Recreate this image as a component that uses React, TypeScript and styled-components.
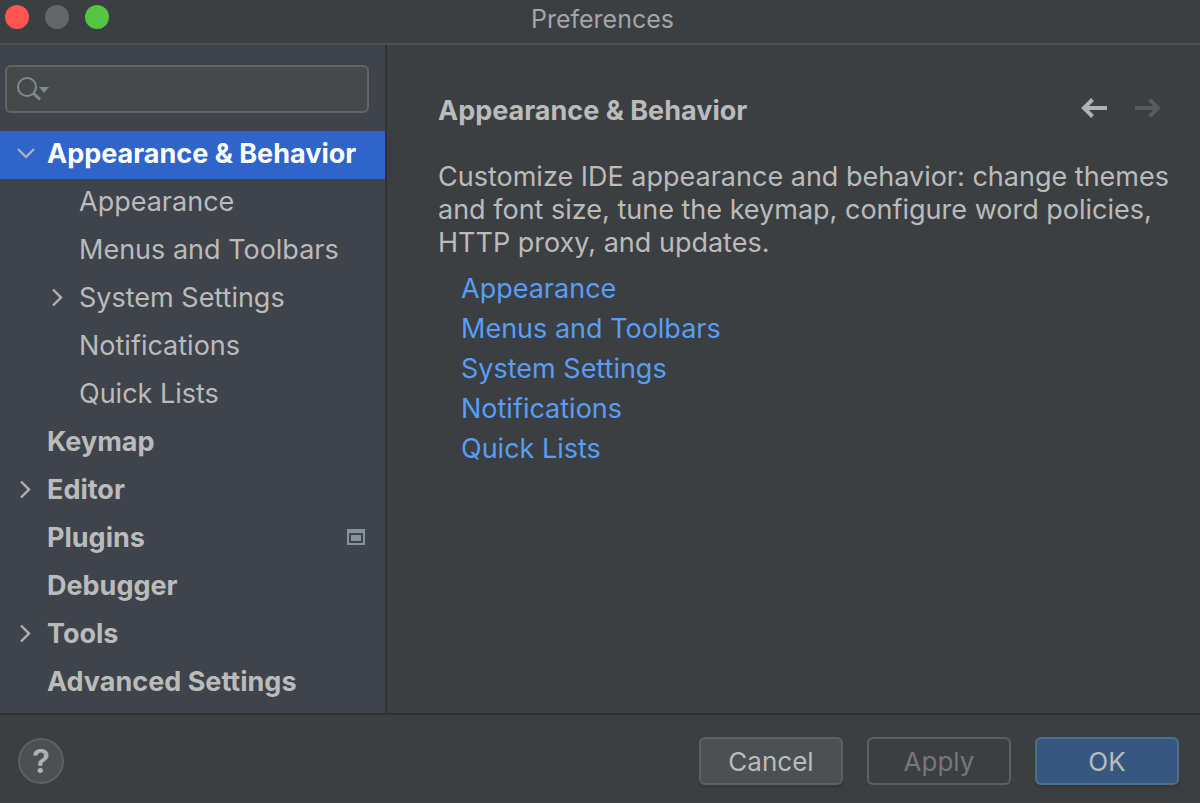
import React, { useState } from "react";
import styled, { createGlobalStyle } from "styled-components";

const GlobalStyle = createGlobalStyle`
  *, *::before, *::after { box-sizing: border-box; }
  body {
    margin: 0;
    background: #3c3f41;
    color: #bbbbbb;
    font-family: Inter, "Liberation Sans", sans-serif;
    font-size: 27px;
    line-height: 32px;
  }
  button, input { font: inherit; color: inherit; }
  ul { list-style: none; margin: 0; padding: 0; }
`;

const Window = styled.div`
  display: flex;
  flex-direction: column;
  min-height: 100vh;
`;

const TitleBar = styled.header`
  display: grid;
  grid-template-columns: 1fr auto 1fr;
  align-items: start;
  height: 45px;
  padding: 5px 0 0 5px;
  border-bottom: 2px solid #515151;
`;

const WindowControls = styled.div`
  display: flex;
  gap: 16px;
`;

const WindowControl = styled.button<{ $color: string }>`
  width: 24px;
  height: 24px;
  padding: 0;
  border: 0;
  border-radius: 50%;
  background: ${(p) => p.$color};
`;

const WindowTitle = styled.div`
  color: #a4a5a6;
  font-size: 25px;
  line-height: 28px;
`;

const Body = styled.div`
  display: flex;
  flex: 1;
`;

const Sidebar = styled.nav`
  flex: none;
  width: 387px;
  padding: 20px 0 6px;
  border-right: 2px solid #323232;
  background: #3f434c;
`;

const SearchBox = styled.label`
  display: flex;
  align-items: center;
  height: 48px;
  margin: 0 16px 18px 5px;
  padding-left: 8px;
  border: 2px solid #646464;
  border-radius: 6px;
  background: #45494a;
`;

const SearchInput = styled.input`
  flex: 1;
  min-width: 0;
  border: 0;
  outline: 0;
  background: transparent;
`;

const TreeRow = styled.button<{ $level: number; $selected: boolean }>`
  display: flex;
  align-items: center;
  width: 100%;
  height: 48px;
  padding: 0 20px 2px ${(p) => (p.$level === 0 ? 16 : 48)}px;
  border: 0;
  background: ${(p) => (p.$selected ? "#2f65ca" : "transparent")};
  color: ${(p) => (p.$selected ? "#ffffff" : "#bbbbbb")};
  font-weight: ${(p) => (p.$level === 0 ? 700 : 400)};
  text-align: left;
  white-space: nowrap;
`;

const Disclosure = styled.span`
  display: flex;
  flex: none;
  width: 31px;
`;

const RowLabel = styled.span`
  flex: 1;
`;

const Content = styled.main`
  flex: 1;
  min-width: 0;
  padding: 50px 20px 32px 51px;
`;

const ContentHeader = styled.div`
  display: flex;
  align-items: center;
  justify-content: space-between;
`;

const Heading = styled.h1`
  margin: 0;
  font-size: 27px;
  font-weight: 700;
`;

const History = styled.div`
  display: flex;
  gap: 22px;
  padding-right: 16px;
`;

const HistoryButton = styled.button`
  display: flex;
  padding: 0 2px 6px;
  border: 0;
  background: transparent;
  color: #afb1b3;
  &:disabled { color: #5a5a5a; }
`;

const Description = styled.p`
  margin: 33px 0 10px;
  line-height: 33px;
`;

const LinkList = styled.ul`
  padding-left: 23px;
`;

const LinkItem = styled.li`
  line-height: 40px;
`;

const PageLink = styled.a`
  color: #589df6;
  text-decoration: none;
`;

const Footer = styled.footer`
  display: flex;
  align-items: center;
  justify-content: space-between;
  padding: 22px 21px 18px 18px;
  border-top: 2px solid #323232;
`;

const HelpButton = styled.button`
  width: 46px;
  height: 46px;
  padding: 0;
  border: 2px solid #5e6060;
  border-radius: 50%;
  background: #4c5052;
  color: #afb1b3;
  font-size: 33px;
  font-weight: 600;
`;

const Actions = styled.div`
  display: flex;
  gap: 24px;
`;

const ActionButton = styled.button<{ $primary?: boolean }>`
  width: 144px;
  height: 48px;
  padding: 2px 0 0;
  border: 2px solid ${(p) => (p.$primary ? "#4c708c" : "#5e6060")};
  border-radius: 6px;
  background: ${(p) => (p.$primary ? "#365880" : "#4c5052")};
  box-shadow: 0 3px 1px #36393b;
  font-size: 26px;
  &:disabled {
    background: transparent;
    box-shadow: none;
    color: #777777;
  }
`;

const SearchIcon = () => (
  <svg width="36" height="32" viewBox="0 0 36 32" fill="none" aria-hidden="true">
    <circle cx="12" cy="14" r="9" stroke="#7f8b91" strokeWidth="2" />
    <path d="M18 20 25 26.5" stroke="#7f8b91" strokeWidth="3" />
    <path d="M24 14h10l-5 6z" fill="#7f8b91" />
  </svg>
);

const Chevron = ({ open }: { open: boolean }) => (
  <svg width="20" height="20" viewBox="0 0 20 20" fill="none" stroke="#afb1b3" strokeWidth="2.400" aria-hidden="true">
    <path d={open ? "M2 5 10 13 18 5" : "M5 1.500 13 9.500 5 17.500"} />
  </svg>
);

const ProjectIcon = () => (
  <svg width="18" height="18" viewBox="0 0 18 18" fill="#87939a" aria-hidden="true">
    <path fillRule="evenodd" d="M0 0h18v16H0zM2 4v10h14V4z" />
    <path d="M4 6h10v6H4z" />
  </svg>
);

const Arrow = ({ forward }: { forward?: boolean }) => (
  <svg width="28" height="20" viewBox="0 0 28 20" fill="none" stroke="currentColor" strokeWidth="4" aria-hidden="true">
    <path d={forward ? "M1 10h23M15.500 1.500 24 10l-8.500 8.500" : "M27 10H4M12.500 1.500 4 10l8.500 8.500"} />
  </svg>
);

type Item = { label: string; level: number; open?: boolean; project?: boolean };

const items: Item[] = [
  { label: "Appearance & Behavior", level: 0, open: true },
  { label: "Appearance", level: 1 },
  { label: "Menus and Toolbars", level: 1 },
  { label: "System Settings", level: 1, open: false },
  { label: "Notifications", level: 1 },
  { label: "Quick Lists", level: 1 },
  { label: "Keymap", level: 0 },
  { label: "Editor", level: 0, open: false },
  { label: "Plugins", level: 0, project: true },
  { label: "Debugger", level: 0 },
  { label: "Tools", level: 0, open: false },
  { label: "Advanced Settings", level: 0 },
];

const links = ["Appearance", "Menus and Toolbars", "System Settings", "Notifications", "Quick Lists"];

export default function App() {
  const [selected, setSelected] = useState(0);
  return (
    <>
      <GlobalStyle />
      <Window>
        <TitleBar>
          <WindowControls>
            <WindowControl $color="#ff5450" aria-label="Close" />
            <WindowControl $color="#656668" aria-label="Minimize" />
            <WindowControl $color="#54c443" aria-label="Zoom" />
          </WindowControls>
          <WindowTitle>Preferences</WindowTitle>
        </TitleBar>
        <Body>
          <Sidebar aria-label="Settings">
            <SearchBox>
              <SearchIcon />
              <SearchInput type="text" aria-label="Search settings" />
            </SearchBox>
            <ul>
              {items.map((item, i) => (
                <li key={item.label}>
                  <TreeRow
                    $level={item.level}
                    $selected={i === selected}
                    aria-expanded={item.open}
                    onClick={() => setSelected(i)}
                  >
                    <Disclosure>{item.open !== undefined && <Chevron open={item.open} />}</Disclosure>
                    <RowLabel>{item.label}</RowLabel>
                    {item.project && <ProjectIcon />}
                  </TreeRow>
                </li>
              ))}
            </ul>
          </Sidebar>
          <Content>
            <ContentHeader>
              <Heading>Appearance &amp; Behavior</Heading>
              <History>
                <HistoryButton aria-label="Back">
                  <Arrow />
                </HistoryButton>
                <HistoryButton aria-label="Forward" disabled>
                  <Arrow forward />
                </HistoryButton>
              </History>
            </ContentHeader>
            <Description>
              Customize IDE appearance and behavior: change themes and font size, tune the keymap, configure word
              policies, HTTP proxy, and updates.
            </Description>
            <LinkList>
              {links.map((label) => (
                <LinkItem key={label}>
                  <PageLink href="#">{label}</PageLink>
                </LinkItem>
              ))}
            </LinkList>
          </Content>
        </Body>
        <Footer>
          <HelpButton aria-label="Help">?</HelpButton>
          <Actions>
            <ActionButton>Cancel</ActionButton>
            <ActionButton disabled>Apply</ActionButton>
            <ActionButton $primary>OK</ActionButton>
          </Actions>
        </Footer>
      </Window>
    </>
  );
}
